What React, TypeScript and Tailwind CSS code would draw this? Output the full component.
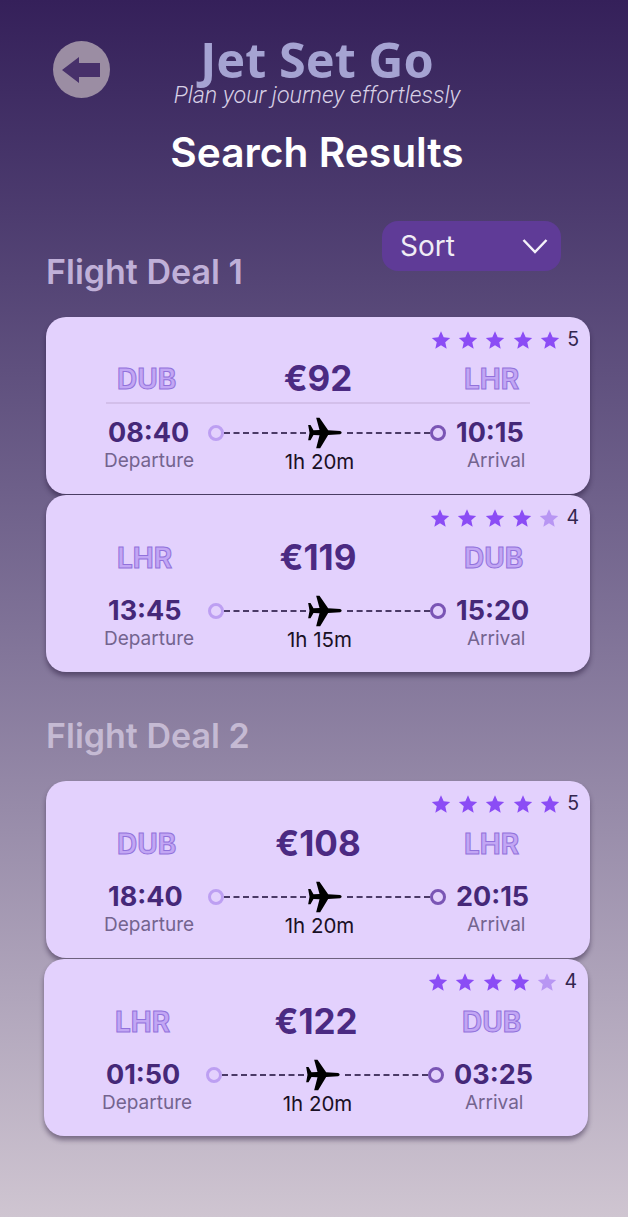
type Flight = {
  from: string;
  to: string;
  price: string;
  depart: string;
  arrive: string;
  duration: string;
  rating: number;
};

const inter = "font-['Inter','Liberation_Sans',sans-serif]";

function Star({ filled }: { filled: boolean }) {
  return (
    <svg viewBox="0 0 24 24" className="w-[20px] h-[20px]">
      <path
        d="M12 1.5l3.2 7.2 7.8.8-5.9 5.2 1.7 7.7L12 18.4l-6.8 4 1.7-7.7L1 9.5l7.8-.8z"
        fill={filled ? "#8b4cf5" : "#b896f3"}
      />
    </svg>
  );
}

function Plane() {
  return (
    <svg viewBox="20 15 110 102" className="w-[37px] h-[34px] shrink-0">
      <path
        d="M122 60C128 62 128 68 122 70L86 72L62 112L50 112L60 73L42 72L33 88L26 88L30 65L26 42L33 42L42 58L60 57L50 20L60 20L86 58Z"
        fill="#000"
      />
    </svg>
  );
}

function FlightCard({ flight, divider, shifted }: { flight: Flight; divider?: boolean; shifted?: boolean }) {
  return (
    <div
      className={`h-[177px] rounded-[20px] bg-[#e3d1fd] shadow-[0_4px_5px_rgba(30,15,50,0.45)] flex flex-col ${
        shifted ? "-ml-[2px] mr-[2px]" : ""
      }`}
    >
      <div className="flex justify-end items-center gap-[7.3px] pt-[12px] pr-[11px] h-[34px]">
        {[1, 2, 3, 4, 5].map((n) => (
          <Star key={n} filled={n <= flight.rating} />
        ))}
        <span className="text-[19.5px] leading-none text-[#33264f]">{flight.rating}</span>
      </div>
      <div
        className={`mx-[60px] h-[53px] pt-[4px] grid grid-cols-[146px_132px_146px] items-center ${
          divider ? "border-b-2 border-[#d3bfea]" : ""
        }`}
      >
        <span className="pl-[11px] text-[28px] font-bold text-[#c2a6f4] [-webkit-text-stroke:1px_#9272dc]">
          {flight.from}
        </span>
        <span className="text-center whitespace-nowrap text-[35px] leading-none font-bold text-[#4b2a82]">
          {flight.price}
        </span>
        <span className="pl-[80px] text-[28px] font-bold text-[#c2a6f4] [-webkit-text-stroke:1px_#9272dc]">
          {flight.to}
        </span>
      </div>
      <div className="flex mt-[13px]">
        <div className="w-[162px] pl-[58px] flex flex-col items-start">
          <span className="pl-[4px] text-[27px] leading-[32px] font-bold text-[#452878]">{flight.depart}</span>
          <span className="text-[19px] leading-[24px] text-[#74648f]">Departure</span>
        </div>
        <div className="w-[238px] flex flex-col items-center">
          <div className="w-full flex items-center h-[32px]">
            <span className="w-[16px] h-[16px] rounded-full border-[3px] border-[#bd9ff2] shrink-0" />
            <span className="w-[82px] border-t-2 border-dashed border-[#4a3a66]" />
            <Plane />
            <span className="ml-[4px] flex-1 border-t-2 border-dashed border-[#4a3a66]" />
            <span className="w-[16px] h-[16px] rounded-full border-[3px] border-[#7a55b5] shrink-0" />
          </div>
          <span className="pr-[15px] text-[20.5px] leading-[26px] text-[#1a1025]">{flight.duration}</span>
        </div>
        <div className="flex-1 ml-[10px] flex flex-col items-start">
          <span className="text-[27px] leading-[32px] font-bold text-[#452878]">{flight.arrive}</span>
          <span className="pl-[11px] text-[19px] leading-[24px] text-[#74648f]">Arrival</span>
        </div>
      </div>
    </div>
  );
}

export default function App() {
  const deal1: Flight[] = [
    { from: "DUB", to: "LHR", price: "€92", depart: "08:40", arrive: "10:15", duration: "1h 20m", rating: 5 },
    { from: "LHR", to: "DUB", price: "€119", depart: "13:45", arrive: "15:20", duration: "1h 15m", rating: 4 },
  ];
  const deal2: Flight[] = [
    { from: "DUB", to: "LHR", price: "€108", depart: "18:40", arrive: "20:15", duration: "1h 20m", rating: 5 },
    { from: "LHR", to: "DUB", price: "€122", depart: "01:50", arrive: "03:25", duration: "1h 20m", rating: 4 },
  ];

  return (
    <div className={`${inter} w-[628px] h-[1217px] overflow-hidden bg-gradient-to-b from-[#35205a] to-[#cfc5d1] pt-[32px]`}>
      <header className="flex pl-[53px]">
        <button className="w-[57px] h-[57px] mt-[9px] rounded-full bg-[#9b8da3] shrink-0">
          <svg viewBox="0 0 57 57" className="w-[57px] h-[57px]">
            <path d="M9 29L26 16V22H47V36H26V42Z" fill="#47306a" />
          </svg>
        </button>
        <div className="flex-1 pt-[5px] pr-[104px] flex flex-col items-center">
          <h1 className="font-['Noto_Sans',sans-serif] text-[48.5px] leading-[44px] font-bold text-[#a5a3d2]">Jet Set Go</h1>
          <p className="font-['Roboto',sans-serif] text-[23.3px] leading-[28px] font-light italic text-[#d8d0e6]">
            Plan your journey effortlessly
          </p>
        </div>
      </header>
      <h2 className="mt-[20px] pl-[6px] text-center text-[40.7px] leading-[48px] font-semibold text-white">Search Results</h2>
      <section className="mt-[44px] pl-[46px] pr-[38px]">
        <div className="flex justify-between items-start h-[72px]">
          <h3 className="mt-[29px] text-[34px] leading-[44px] font-semibold text-[#c0b0d8]">Flight Deal 1</h3>
          <button className="w-[179px] h-[50px] mr-[29px] rounded-[16px] bg-[#5f3b97] flex items-center justify-between pl-[18px] pr-[13px] text-[28px] text-[#f0ecf5]">
            Sort
            <svg viewBox="0 0 26 16" className="w-[26px] h-[16px]" fill="none" stroke="#f5f2fa" strokeWidth="2.5">
              <path d="M1.5 2L13 14 24.5 2" />
            </svg>
          </button>
        </div>
        <div className="mt-[24px] flex flex-col gap-[1px]">
          {deal1.map((f, i) => (
            <FlightCard key={f.depart} flight={f} divider={i === 0} />
          ))}
        </div>
        <h3 className="mt-[42px] text-[34px] leading-[44px] font-semibold text-[#c5bad3]">Flight Deal 2</h3>
        <div className="mt-[23px] flex flex-col gap-[1px]">
          {deal2.map((f, i) => (
            <FlightCard key={f.depart} flight={f} shifted={i === 1} />
          ))}
        </div>
      </section>
    </div>
  );
}
